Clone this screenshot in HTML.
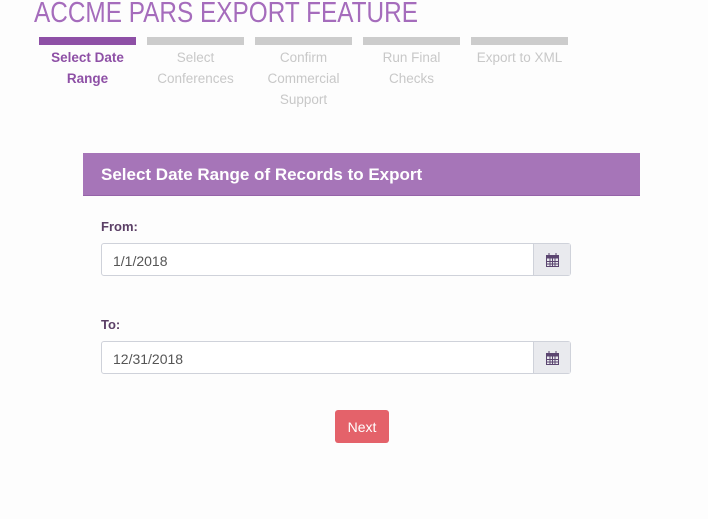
<!DOCTYPE html>
<html><head><meta charset="utf-8"><style>
body{margin:0;width:708px;height:519px;background:#fdfdfd;font-family:"Liberation Sans",sans-serif;position:relative;overflow:hidden}
.t{position:absolute;left:34px;top:-3px;font-size:29px;font-weight:normal;color:#a56cbc;transform:scaleX(0.84);transform-origin:0 0;-webkit-text-stroke:0}
.bar{position:absolute;top:37px;width:97px;height:8px;background:#cccccc}
.lbl{position:absolute;top:47px;width:97px;text-align:center;font-size:13.5px;line-height:21px;color:#c8c8c8}
.hd{position:absolute;left:83px;top:153px;width:557px;height:43px;background:#a675b8;border-bottom:1px solid #9563a8;color:#fff;font-weight:bold;font-size:17px;line-height:43px;box-sizing:border-box;padding-left:18px}
.fl{position:absolute;left:101px;font-size:13px;font-weight:bold;color:#5b3f66}
.in{position:absolute;left:101px;width:470px;height:33px;border:1px solid #cfd2da;border-radius:3px;background:#fff;box-sizing:border-box;font-size:14px;color:#555;line-height:35px;padding-left:11px}
.ad{position:absolute;right:0;top:0;width:36px;height:31px;background:#e9eaee;border-left:1px solid #cfd2da;display:flex;align-items:center;justify-content:center}
.btn{position:absolute;left:335px;top:410px;width:54px;height:33px;background:#e4626a;border-radius:3px;color:#fff;font-size:14px;text-align:center;line-height:35px}
</style></head><body>
<div class="t">ACCME PARS EXPORT FEATURE</div>
<div class="bar" style="left:39px;background:#8e50a6"></div>
<div class="bar" style="left:147px"></div>
<div class="bar" style="left:255px"></div>
<div class="bar" style="left:363px"></div>
<div class="bar" style="left:471px"></div>
<div class="lbl" style="left:39px;color:#8e50a6;font-weight:bold">Select Date<br>Range</div>
<div class="lbl" style="left:147px">Select<br>Conferences</div>
<div class="lbl" style="left:255px">Confirm<br>Commercial<br>Support</div>
<div class="lbl" style="left:363px">Run Final<br>Checks</div>
<div class="lbl" style="left:471px">Export to XML</div>
<div class="hd">Select Date Range of Records to Export</div>
<div class="fl" style="top:219px">From:</div>
<div class="in" style="top:243px">1/1/2018<div class="ad"><svg width="13" height="14" viewBox="0 0 13 14"><rect x="0.5" y="2.5" width="12" height="11" fill="none" stroke="#5b4570"/><rect x="0.5" y="2.5" width="12" height="3" fill="#5b4570"/><path d="M3 0v4M10 0v4M0.5 8.5h12M0.5 11h12M4 5v9M6.5 5v9M9 5v9" stroke="#5b4570"/></svg></div></div>
<div class="fl" style="top:317px">To:</div>
<div class="in" style="top:341px">12/31/2018<div class="ad"><svg width="13" height="14" viewBox="0 0 13 14"><rect x="0.5" y="2.5" width="12" height="11" fill="none" stroke="#5b4570"/><rect x="0.5" y="2.5" width="12" height="3" fill="#5b4570"/><path d="M3 0v4M10 0v4M0.5 8.5h12M0.5 11h12M4 5v9M6.5 5v9M9 5v9" stroke="#5b4570"/></svg></div></div>
<div class="btn">Next</div>
</body></html>
